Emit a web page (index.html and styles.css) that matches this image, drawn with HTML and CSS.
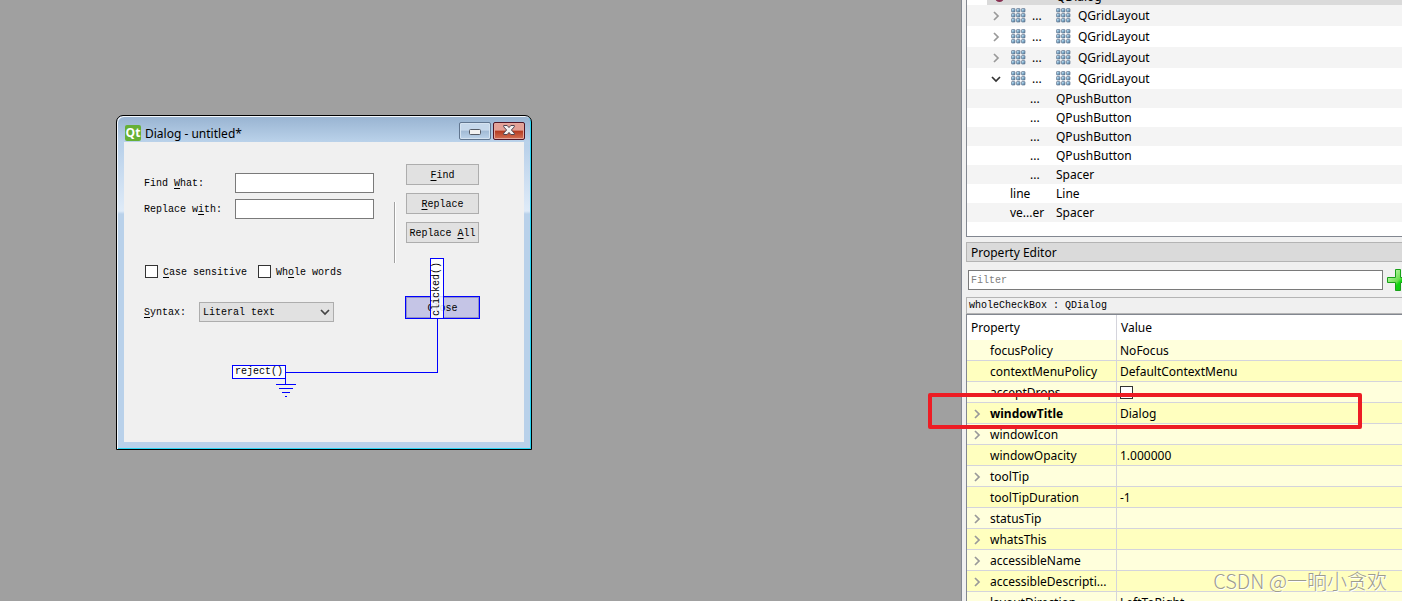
FILE: index.html
```html
<!DOCTYPE html>
<html lang="en">
<head>
<meta charset="utf-8">
<title>Qt Designer</title>
<link rel="stylesheet" href="styles.css">
</head>
<body>
<svg width="0" height="0" class="defs" aria-hidden="true">
  <defs>
    <linearGradient id="bead" x1="0" y1="0" x2="1" y2="1"><stop offset="0" stop-color="#f0faff"/><stop offset=".45" stop-color="#8fbcd8"/><stop offset="1" stop-color="#4f6c8b"/></linearGradient>
    <linearGradient id="leaf" x1="0" y1="0" x2="1" y2="1"><stop offset="0" stop-color="#dcffd0"/><stop offset=".5" stop-color="#6be04f"/><stop offset=".6" stop-color="#12d312"/><stop offset="1" stop-color="#08c008"/></linearGradient>
    <symbol id="grid" viewBox="0 0 15 15">
      <g fill="url(#bead)" stroke="#63768f" stroke-width=".7">
        <rect x=".5" y=".5" width="3.500" height="3.500" rx=".6"/><rect x="5.500" y=".5" width="3.500" height="3.500" rx=".6"/><rect x="10.500" y=".5" width="3.500" height="3.500" rx=".6"/>
        <rect x=".5" y="5.500" width="3.500" height="3.500" rx=".6"/><rect x="5.500" y="5.500" width="3.500" height="3.500" rx=".6"/><rect x="10.500" y="5.500" width="3.500" height="3.500" rx=".6"/>
        <rect x=".5" y="10.500" width="3.500" height="3.500" rx=".6"/><rect x="5.500" y="10.500" width="3.500" height="3.500" rx=".6"/><rect x="10.500" y="10.500" width="3.500" height="3.500" rx=".6"/>
      </g>
    </symbol>
    <symbol id="right" viewBox="0 0 10 10"><path d="M3 1l4 4-4 4" fill="none" stroke="currentColor" stroke-width="1.7"/></symbol>
    <symbol id="down" viewBox="0 0 10 10"><path d="M1 3l4 4 4-4" fill="none" stroke="currentColor" stroke-width="1.7"/></symbol>
  </defs>
</svg>
<div class="app">
  <main class="canvas">
    <section class="window" aria-label="Dialog - untitled*">
      <header class="titlebar">
        <span class="qt">Qt</span>
        <span class="title">Dialog - untitled*</span>
        <button class="win-btn" aria-label="Minimize"><svg width="12" height="6" viewBox="0 0 12 6"><rect x=".5" y=".5" width="11" height="5" rx="1" fill="#f2f2f2" stroke="#555b66"/></svg></button>
        <button class="win-btn close" aria-label="Close window"><svg width="12" height="10" viewBox="0 0 12 10"><path d="M.7.5h3.500L6 2.600 7.800.5h3.500v1.300L8.400 5l2.900 3.200v1.300H7.800L6 7.400 4.200 9.500H.7V8.200L3.600 5 .7 1.800z" fill="#f3f3f3" stroke="#4e4450"/></svg></button>
      </header>
      <form class="content">
        <div class="fields">
          <div class="entry"><label for="find">Find <u>W</u>hat:</label><input id="find" type="text"></div>
          <div class="entry"><label for="repl">Replace w<u>i</u>th:</label><input id="repl" type="text"></div>
          <div class="checks">
            <label><input type="checkbox"><span><u>C</u>ase sensitive</span></label>
            <label><input type="checkbox"><span>Wh<u>o</u>le words</span></label>
          </div>
          <div class="syntax"><label for="syntax"><u>S</u>yntax:</label>
            <span class="combo"><select id="syntax"><option>Literal text</option></select><svg width="10" height="10"><use href="#down"/></svg></span>
          </div>
        </div>
        <div class="rule"></div>
        <div class="buttons">
          <button type="button"><u>F</u>ind</button>
          <button type="button"><u>R</u>eplace</button>
          <button type="button">Replace <u>A</u>ll</button>
          <button type="button" class="picked">Close</button>
        </div>
        <svg class="wires" width="400" height="300" viewBox="0 0 400 300" fill="none" stroke="#00f" shape-rendering="crispEdges"><path d="M313.500 177v53.500H162M161.500 237v6M152 242.500h20M155 246.500h14M158 250.500h8M161 254.500h2"/></svg>
        <span class="tag signal">clicked()</span>
        <span class="tag slot">reject()</span>
      </form>
    </section>
  </main>

  <aside class="side">
    <div class="inspector">
      <div class="selected"><i></i><span>QDialog</span></div>
      <table class="tree">
        <colgroup><col class="names"><col></colgroup>
        <tbody>
        <tr class="tall"><td><div class="node"><svg class="arrow"><use href="#right"/></svg><svg class="grid"><use href="#grid"/></svg>...</div></td><td><div class="kind"><svg class="grid"><use href="#grid"/></svg>QGridLayout</div></td></tr>
        <tr class="tall"><td><div class="node"><svg class="arrow"><use href="#right"/></svg><svg class="grid"><use href="#grid"/></svg>...</div></td><td><div class="kind"><svg class="grid"><use href="#grid"/></svg>QGridLayout</div></td></tr>
        <tr class="tall"><td><div class="node"><svg class="arrow"><use href="#right"/></svg><svg class="grid"><use href="#grid"/></svg>...</div></td><td><div class="kind"><svg class="grid"><use href="#grid"/></svg>QGridLayout</div></td></tr>
        <tr class="tall"><td><div class="node"><svg class="arrow open"><use href="#down"/></svg><svg class="grid"><use href="#grid"/></svg>...</div></td><td><div class="kind"><svg class="grid"><use href="#grid"/></svg>QGridLayout</div></td></tr>
        <tr><td class="child">...</td><td>QPushButton</td></tr>
        <tr><td class="child">...</td><td>QPushButton</td></tr>
        <tr><td class="child">...</td><td>QPushButton</td></tr>
        <tr><td class="child">...</td><td>QPushButton</td></tr>
        <tr><td class="child">...</td><td>Spacer</td></tr>
        <tr><td class="leaf">line</td><td>Line</td></tr>
        <tr><td class="leaf">ve...er</td><td>Spacer</td></tr>
        </tbody>
      </table>
    </div>
    <h2 class="dock">Property Editor</h2>
    <div class="filter">
      <input type="text" placeholder="Filter" aria-label="Filter">
      <button class="add" aria-label="Add property"><svg width="22" height="22" viewBox="0 0 22 22"><path d="M8.500.5h5v8h8v5h-8v8h-5v-8h-8v-5h8z" fill="url(#leaf)" stroke="#18a018"/></svg></button>
    </div>
    <div class="object">wholeCheckBox : QDialog</div>
    <table class="props">
      <colgroup><col class="keys"><col></colgroup>
      <thead><tr><th>Property</th><th>Value</th></tr></thead>
      <tbody>
      <tr><td>focusPolicy</td><td>NoFocus</td></tr>
      <tr><td>contextMenuPolicy</td><td>DefaultContextMenu</td></tr>
      <tr><td><label for="drops">acceptDrops</label></td><td><input id="drops" type="checkbox"></td></tr>
      <tr class="changed"><td><svg class="arrow"><use href="#right"/></svg>windowTitle</td><td>Dialog</td></tr>
      <tr><td><svg class="arrow"><use href="#right"/></svg>windowIcon</td><td></td></tr>
      <tr><td>windowOpacity</td><td>1.000000</td></tr>
      <tr><td><svg class="arrow"><use href="#right"/></svg>toolTip</td><td></td></tr>
      <tr><td>toolTipDuration</td><td>-1</td></tr>
      <tr><td><svg class="arrow"><use href="#right"/></svg>statusTip</td><td></td></tr>
      <tr><td><svg class="arrow"><use href="#right"/></svg>whatsThis</td><td></td></tr>
      <tr><td><svg class="arrow"><use href="#right"/></svg>accessibleName</td><td></td></tr>
      <tr><td><svg class="arrow"><use href="#right"/></svg>accessibleDescripti...</td><td></td></tr>
      <tr><td>layoutDirection</td><td>LeftToRight</td></tr>
      </tbody>
    </table>
  </aside>
  <div class="highlight"></div>
  <div class="watermark">CSDN @一晌小贪欢</div>
</div>
</body>
</html>
```
FILE: styles.css
```css
* { box-sizing: border-box; }
body { margin: 0; color: #000; font: 12px/19px "Noto Sans", "Noto Sans CJK SC", sans-serif; }
button, input, select { font: inherit; color: inherit; margin: 0; padding: 0; border-radius: 0; }
table { border-collapse: collapse; table-layout: fixed; width: 100%; }
td, th { padding: 0; text-align: left; font-weight: normal; white-space: nowrap; overflow: hidden; }
.defs { position: absolute; }
.app { position: relative; display: flex; height: 100vh; overflow: hidden; background: #a0a0a0; }
.canvas { position: relative; flex: 1; }

input[type="checkbox"] { appearance: none; width: 13px; height: 13px; border: 1px solid #333; background: #fff; flex: none; }

/* Form window on the canvas */
.window { position: absolute; left: 116px; top: 115px; width: 416px; padding: 0 7px 7px; border: 1px solid #000; border-radius: 7px 7px 0 0;
  background: linear-gradient(#98b3d1, #bad2ea 26px, #b9d1ea 30px, #dfebf8 95px, #b9d1ea 98px); box-shadow: inset 1px 1px #f4f8fc, inset -1px -1px #29d5f3; }
.titlebar { display: flex; align-items: center; height: 26px; gap: 2px; padding-left: 1px; }
.qt { width: 16px; height: 16px; margin-top: 8px; border-radius: 2px; background: #66b036; color: #fff; font: bold 12px/15px "Open Sans", sans-serif; text-align: center; }
.title { flex: 1; margin-top: 8px; padding-left: 2px; }
.win-btn { display: flex; align-items: center; justify-content: center; width: 32px; height: 18px; margin-top: 3px; border: 1px solid #60758f; border-radius: 2px;
  background: linear-gradient(#c6d8eb 45%, #a1bad5 50%, #bcd3ea); box-shadow: inset 0 0 0 1px #d5e3f1; }
.win-btn svg { margin-top: 2px; }
.win-btn.close { margin-right: -1px; border-color: #501525; background: linear-gradient(#e3a197 45%, #b43a20 50%, #d47256); box-shadow: inset 0 0 0 1px #e4a79d; }
.win-btn.close svg { margin-top: -2px; }
.content { position: relative; display: flex; min-height: 300px; padding: 22px 45px 0 20px; background: #f0f0f0; font: 10px/14px "Liberation Mono", monospace; }
.content u { text-underline-offset: 2px; }
.fields { flex: 1; padding-top: 9px; }
.entry { display: flex; align-items: center; margin-bottom: 6px; }
.entry label { width: 91px; padding-top: 2px; }
.entry input { flex: 1; min-width: 0; height: 20px; padding: 0 3px; border: 1px solid #7a7a7a; background: #fff; }
.checks { display: flex; gap: 11px; margin: 46px 0 24px 1px; }
.checks label { display: flex; gap: 5px; white-space: nowrap; height: 13px; }
.checks span { padding-top: 1px; }
.syntax { display: flex; align-items: center; }
.syntax label { width: 55px; padding-top: 2px; }
.combo { display: grid; align-items: center; width: 135px; }
.combo > * { grid-area: 1 / 1; }
.combo select { appearance: none; height: 20px; padding: 2px 3px 0; border: 1px solid #adadad; background: #e1e1e1; }
.combo svg { justify-self: end; margin-right: 4px; color: #444; pointer-events: none; }
.rule { width: 2px; height: 61px; margin: 38px 10px 0 20px; border-left: 1px solid #a0a0a0; border-right: 1px solid #fff; }
.buttons { display: flex; flex-direction: column; gap: 8px; width: 73px; }
.buttons button { height: 21px; padding-top: 2px; border: 1px solid #adadad; background: #e1e1e1; white-space: nowrap; }
.buttons .picked { margin-top: 46px; border-color: #9191c8; background: #c5c5e6; outline: 1px solid #00f; }
.wires { position: absolute; left: 0; top: 0; pointer-events: none; }
.tag { position: absolute; border: 1px solid #00f; background: #ffffffd9; line-height: 12px; text-align: center; }
.signal { left: 306px; top: 116px; width: 14px; height: 61px; writing-mode: vertical-rl; transform: rotate(180deg); }
.slot { left: 108px; top: 223px; width: 54px; height: 14px; }

/* Dock column */
.side { display: flex; flex-direction: column; width: 441px; padding-left: 4px; border-left: 1px solid #828790; background: #f0f0f0; }
.inspector { height: 237px; flex: none; border: solid #828790; border-width: 0 0 1px 1px; background: #fff; }
.selected { display: flex; height: 5px; margin-left: 20px; padding-left: 8px; gap: 52px; overflow: hidden; background: #dadada; align-items: flex-end; line-height: 17px; }
.selected i { width: 9px; height: 9px; margin-bottom: 3px; border-radius: 5px; background: #883052; }
.names { width: 89px; }
.tree tr { height: 19px; }
.tree tr.tall { height: 21px; }
.tree tr:nth-child(odd) { background: #f4f4f4; }
.node, .kind { display: flex; align-items: center; gap: 6px; }
.node { padding-left: 24px; }
.kind { gap: 7px; }
.arrow { width: 10px; height: 10px; color: #999; flex: none; }
.arrow.open { color: #333; }
.grid { width: 15px; height: 15px; flex: none; }
.node .grid { margin-left: 4px; }
.child { padding-left: 63px; }
.leaf { padding-left: 43px; }
.dock { flex: none; height: 20px; margin: 5px 0 8px; padding-left: 4px; border: solid #b4b4b4; border-width: 1px 0 1px 1px; background: #dadada; font-size: 12px; font-weight: normal; line-height: 19px; }
.filter { display: flex; align-items: center; gap: 4px; height: 20px; padding-left: 2px; flex: none; }
.filter input { flex: 1; min-width: 0; height: 20px; padding: 0 2px; border: 1px solid #7a7a7a; background: #fff; font: 10px/14px "Liberation Mono", monospace; }
.filter input::placeholder { color: #808080; opacity: 1; }
.add { width: 15px; height: 22px; border: 0; background: none; overflow: hidden; flex: none; text-align: left; }
.add svg { display: block; }
.object { flex: none; height: 17px; margin-top: 7px; padding-left: 2px; border: solid #b4b4b4; border-width: 1px 0 1px 1px; font: 10px/16px "Liberation Mono", monospace; }
.props { border-left: 1px solid #828790; border-top: 1px solid #828790; background: #fff; border-collapse: separate; border-spacing: 0; }
.keys { width: 150px; }
.props th { height: 25px; padding-left: 4px; }
.props td { height: 21px; padding-left: 3px; border-bottom: 1px solid #d4d4dc; line-height: 19px; }
.props th:first-child, .props td:first-child { border-right: 1px solid #d4d4dc; }
.props td:first-child { padding-left: 23px; }
.props tbody tr { background: #ffffdc; }
.props tbody tr:nth-child(even) { background: #ffffbf; }
.props td input { display: block; }
.props .arrow { margin: 0 8px 0 -18px; vertical-align: -1px; }
.changed td:first-child { font-weight: bold; }

.highlight { position: absolute; right: 40px; top: 393px; width: 434px; height: 36px; border: 4px solid #ed1c24; border-radius: 2px; pointer-events: none; }
.watermark { position: absolute; right: 15px; bottom: 6px; color: #9c9c90; font: 300 20px/28px "Noto Sans CJK SC", sans-serif; text-shadow: 1px 1px #fff; }
```
